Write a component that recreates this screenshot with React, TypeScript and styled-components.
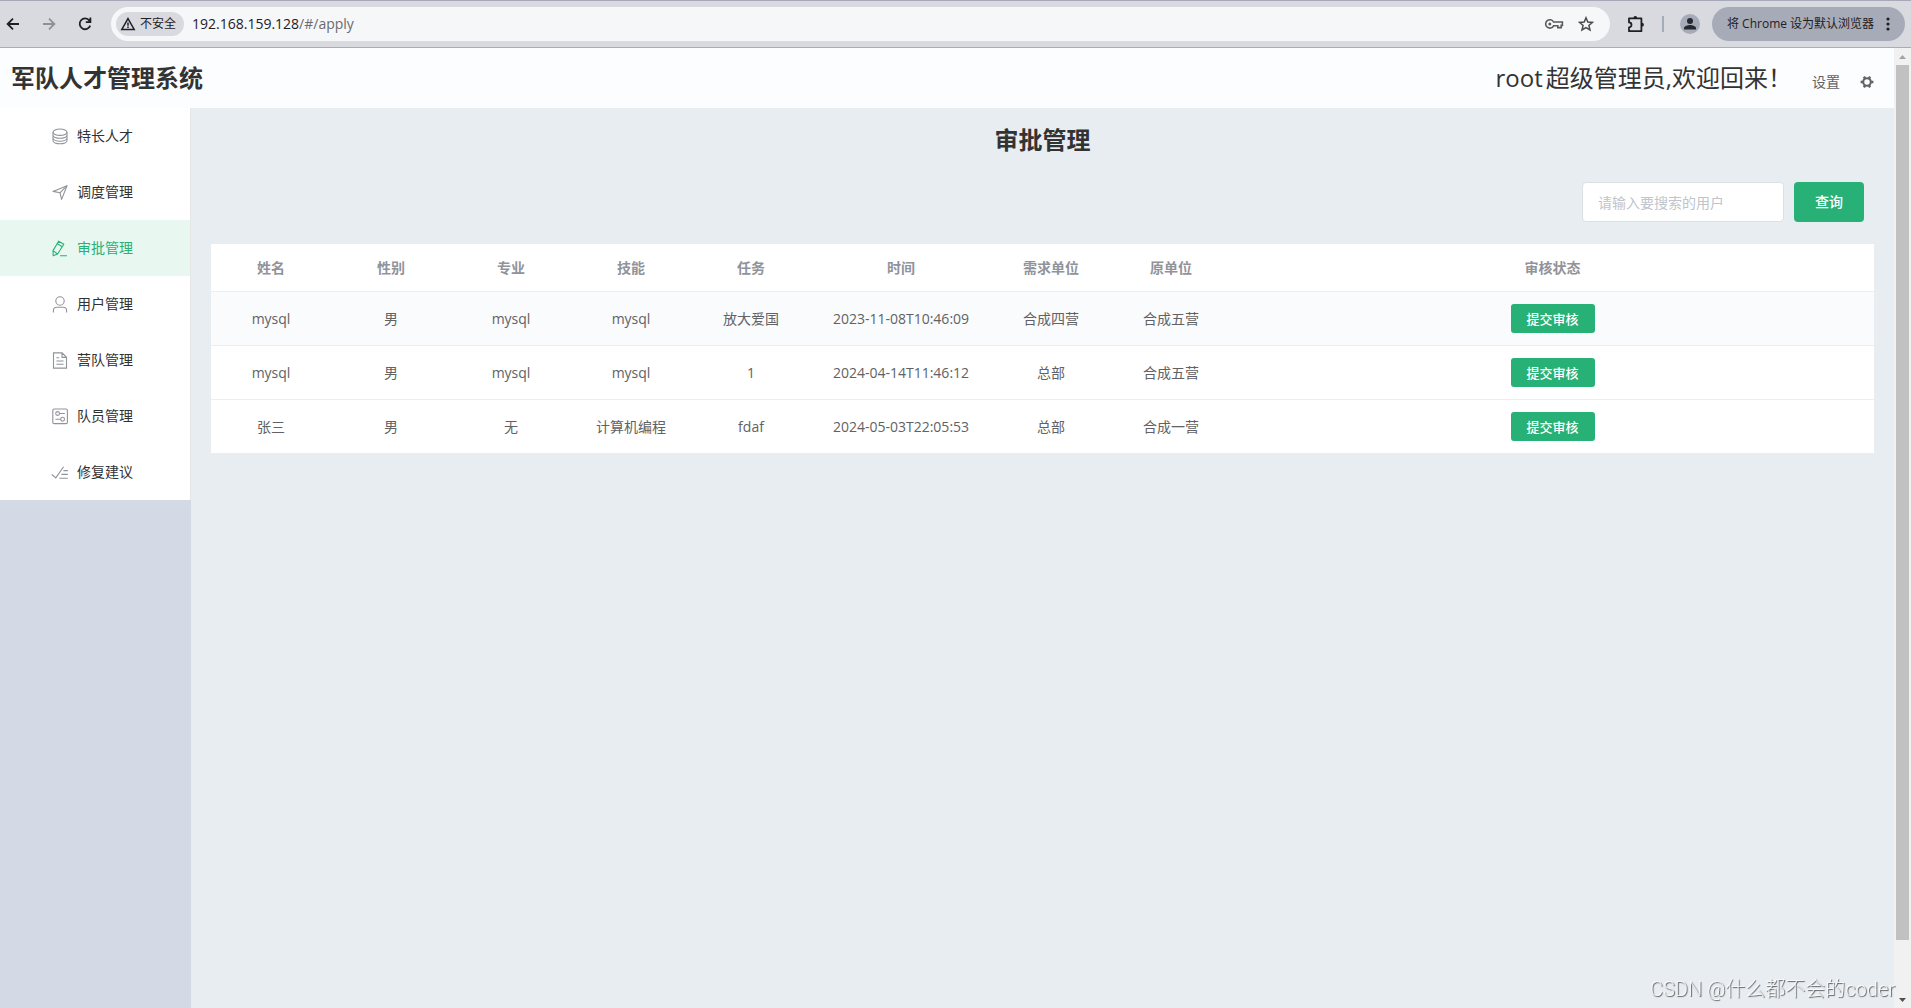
import React from "react";
import styled, { createGlobalStyle, css } from "styled-components";

const GlobalStyle = createGlobalStyle`
  * { box-sizing: border-box; }
  html, body { margin: 0; padding: 0; }
  body, button, input {
    font-family: "Open Sans", "Noto Sans CJK SC", sans-serif;
    font-size: 14px;
    line-height: 20px;
  }
`;

const green = "#28b176";

const Window = styled.div`
  display: flex;
  flex-direction: column;
  height: 100vh;
  overflow: hidden;
  background: #e8edf1;
  color: #303133;
`;

/* ---------- browser toolbar ---------- */

const Toolbar = styled.div`
  display: flex;
  align-items: center;
  flex: none;
  height: 48px;
  padding: 0 6px 0 0;
  background: #d9dae0;
  border-top: 1px solid #a6a9b9;
  border-bottom: 1px solid #abacb5;
`;

const NavButton = styled.button<{ $muted?: boolean }>`
  display: flex;
  align-items: center;
  justify-content: center;
  width: 32px;
  height: 32px;
  padding: 0;
  border: 0;
  background: none;
  color: ${(p) => (p.$muted ? "#8f9096" : "#1f2023")};
`;

const NavGroup = styled.div`
  display: flex;
  gap: 4px;
  padding: 0 10px 0 0;
  margin-left: -3px;
`;

const AddressBar = styled.div`
  display: flex;
  align-items: center;
  flex: 1;
  height: 34px;
  padding: 0 8px 0 5px;
  border-radius: 17px;
  background: #f6f7f9;
`;

const SecurityChip = styled.button`
  display: flex;
  align-items: center;
  gap: 4px;
  height: 24px;
  padding: 0 8px 0 4px;
  border: 0;
  border-radius: 12px;
  background: #d9dae0;
  color: #1f2023;
  font-size: 12px;
  line-height: 24px;
`;

const Url = styled.div`
  flex: 1;
  margin-left: 8px;
  font-size: 14px;
  line-height: 24px;
  color: #1f2023;
`;

const UrlPath = styled.span`
  color: #6a6b6e;
`;

const ActionGroup = styled.div`
  display: flex;
  align-items: center;
  gap: 10px;
  padding-left: 10px;
`;

const Separator = styled.span`
  width: 2px;
  height: 16px;
  background: #a6abb9;
`;

const Avatar = styled.span`
  display: flex;
  align-items: center;
  justify-content: center;
  width: 20px;
  height: 20px;
  border-radius: 50%;
  background: #a6abb9;
`;

const DefaultChip = styled.button`
  display: flex;
  align-items: center;
  justify-content: space-between;
  width: 193px;
  height: 34px;
  margin-left: 6px;
  padding: 0 15px;
  border: 0;
  border-radius: 17px;
  background: #a6abb7;
  color: #1f2023;
  font-size: 12px;
  white-space: nowrap;
`;

/* ---------- page frame ---------- */

const Viewport = styled.div`
  display: flex;
  flex: 1;
  min-height: 0;
`;

const Page = styled.div`
  display: flex;
  flex-direction: column;
  flex: 1;
  min-width: 0;
`;

const Header = styled.header`
  display: flex;
  align-items: baseline;
  justify-content: space-between;
  flex: none;
  height: 60px;
  padding: 0 20px 0 11px;
  background: #fcfdff;
  color: #333;
  line-height: 60px;
`;

const Brand = styled.h1`
  margin: 0;
  font-size: 24px;
  font-weight: 700;
`;

const Account = styled.div`
  display: flex;
  align-items: baseline;
  gap: 20px;
  font-size: 24px;
`;

const UserName = styled.span`
  margin-right: 3px;
`;

const SettingButton = styled.button`
  display: flex;
  align-items: center;
  gap: 20px;
  padding: 0;
  border: 0;
  background: none;
  color: #606266;
`;

const Body = styled.div`
  display: flex;
  flex: 1;
  min-height: 0;
`;

const Aside = styled.aside`
  flex: none;
  width: 191px;
  background: #d3dae6;
`;

const Menu = styled.nav`
  display: flex;
  flex-direction: column;
  background: #fff;
  border-right: 1px solid #e6e6e6;
`;

const MenuItem = styled.a<{ $active?: boolean }>`
  display: flex;
  align-items: center;
  gap: 5px;
  height: 56px;
  padding-left: 48px;
  color: ${(p) => (p.$active ? green : "#303133")};
  text-decoration: none;
  ${(p) => p.$active && css`background: #e9f7f1;`}

  svg {
    width: 24px;
    height: 18px;
    color: ${(p) => (p.$active ? green : "#909399")};
  }
`;

const Main = styled.main`
  flex: 1;
  min-width: 0;
  padding: 14px 20px 20px;
`;

const PageTitle = styled.h2`
  margin: 0;
  font-size: 24px;
  font-weight: 700;
  line-height: 36px;
  text-align: center;
  color: #333;
`;

const SearchBar = styled.form`
  display: flex;
  justify-content: flex-end;
  gap: 10px;
  margin: 24px 10px 22px;
`;

const SearchInput = styled.input`
  width: 202px;
  height: 40px;
  padding: 0 15px;
  border: 1px solid #dcdfe6;
  border-radius: 4px;
  background: #fff;
  color: #606266;

  &::placeholder {
    color: #c0c4cc;
    opacity: 1;
  }
`;

const PrimaryButton = styled.button<{ $small?: boolean }>`
  width: ${(p) => (p.$small ? 84 : 70)}px;
  height: ${(p) => (p.$small ? 29 : 40)}px;
  padding: 0;
  border: 0;
  border-radius: ${(p) => (p.$small ? 3 : 4)}px;
  background: ${green};
  color: #fff;
  font-size: ${(p) => (p.$small ? 13 : 14)}px;
  font-weight: 500;
  vertical-align: middle;
`;

const Table = styled.table`
  width: 100%;
  table-layout: fixed;
  border-collapse: separate;
  border-spacing: 0;
  background: #fff;
  text-align: center;
`;

const HeadCell = styled.th`
  height: 48px;
  padding: 0;
  border-bottom: 1px solid #ebeef5;
  color: #909399;
  font-weight: 700;
`;

const Cell = styled.td`
  height: 54px;
  padding: 0;
  border-bottom: 1px solid #ebeef5;
  color: #606266;
`;

const Row = styled.tr<{ $hover?: boolean }>`
  background: ${(p) => (p.$hover ? "#fafbfd" : "#fff")};
`;

const ScrollTrack = styled.div`
  display: flex;
  flex-direction: column;
  flex: none;
  width: 17px;
  background: #f1f1f1;
`;

const ScrollArrow = styled.span<{ $down?: boolean }>`
  display: flex;
  align-items: center;
  justify-content: center;
  flex: none;
  height: 17px;
  color: ${(p) => (p.$down ? "#505050" : "#a3a3a3")};
`;

const ScrollThumb = styled.span`
  flex: 875;
  margin: 0 2px;
  background: #c1c1c1;
`;

const ScrollRest = styled.span`
  flex: 51;
`;

const Watermark = styled.div`
  position: fixed;
  right: 16px;
  bottom: 4px;
  color: rgba(255, 255, 255, 0.8);
  font-family: Roboto, "Noto Sans CJK SC", sans-serif;
  font-size: 20px;
  font-weight: 300;
  line-height: 30px;
  text-shadow: 1px 1px 1px rgba(0, 0, 0, 0.6);
  pointer-events: none;
`;

/* ---------- icons ---------- */

const Line = ({ children, box = 18 }: { children: React.ReactNode; box?: number }) => (
  <svg width={box} height={box} viewBox="0 0 18 18" fill="none" stroke="currentColor" strokeWidth="1.1" aria-hidden="true">
    {children}
  </svg>
);

const CoinIcon = () => (
  <Line>
    <ellipse cx="9" cy="5.2" rx="7" ry="3.2" />
    <path d="M2 5.2v2.9c0 1.8 3.1 3.2 7 3.2s7-1.4 7-3.2V5.2M2 8.1v2.9c0 1.8 3.1 3.2 7 3.2s7-1.4 7-3.2V8.1M2 11v2.6c0 1.8 3.1 3.2 7 3.2s7-1.4 7-3.2V11" />
  </Line>
);
const PositionIcon = () => (
  <Line>
    <path d="M2 8.4 16 2.7 10.6 16.4 9 9.8z" strokeLinejoin="round" />
    <path d="M9 9.8 16 2.7" />
  </Line>
);
const EditIcon = () => (
  <Line>
    <path d="M7.6 2.2 12.8 5.2 6.6 15 2.2 16.8 2 11.6zM6.2 4.8l5.1 3M2 11.6l4.6 3.4M9 16.8h7" strokeLinejoin="round" />
  </Line>
);
const UserIcon = () => (
  <Line>
    <circle cx="9" cy="6" r="4.2" />
    <path d="M2.4 17.4v-1.8c0-2.2 1.4-3.4 3.4-3.4h6.4c2 0 3.4 1.2 3.4 3.4v1.8" />
  </Line>
);
const DocumentIcon = () => (
  <Line>
    <path d="M2.5 1.9h8.6l4.4 4.4v10.8h-13zM11 2v4.4h4.4M5.4 6.8h2.8M5.4 10h7.2M5.4 13.3h7.2" />
  </Line>
);
const OperationIcon = () => (
  <Line>
    <rect x="1.8" y="2" width="14.6" height="14.6" rx="1.4" />
    <circle cx="6.6" cy="6.5" r="1.9" />
    <circle cx="11.6" cy="12.2" r="1.9" />
    <path d="M8.5 6.5h5.3M4.4 12.2h5.3" />
  </Line>
);
const FinishedIcon = () => (
  <Line>
    <path d="M.8 11.5 4.8 14.9 12.6 3.7M12.4 7.6h4.4M10.4 11.4h6.4M8.4 15.2h8.4" />
  </Line>
);

const GearIcon = () => (
  <svg width="14" height="14" viewBox="0 0 14 14" fill="none" stroke="currentColor" aria-hidden="true">
    <circle cx="7" cy="7" r="3.8" strokeWidth="2.1" />
    <path d="M3.9 1.6 5 3.4M10.1 1.6 9 3.4M3.9 12.4 5 10.6M10.1 12.4 9 10.6M.6 7h2.2M11.2 7h2.2" strokeWidth="2.4" />
  </svg>
);

const BackIcon = () => (
  <svg width="16" height="16" viewBox="0 0 16 16" fill="none" stroke="currentColor" strokeWidth="1.8" aria-hidden="true">
    <path d="M14 8H3M8 2.6 2.6 8 8 13.4" />
  </svg>
);
const ForwardIcon = () => (
  <svg width="16" height="16" viewBox="0 0 16 16" fill="none" stroke="currentColor" strokeWidth="1.8" aria-hidden="true">
    <path d="M2 8h11M8 2.6 13.4 8 8 13.4" />
  </svg>
);
const ReloadIcon = () => (
  <svg width="16" height="16" viewBox="0 0 16 16" fill="none" stroke="currentColor" strokeWidth="1.8" aria-hidden="true">
    <path d="M13.2 9.6A5.4 5.4 0 1 1 12.4 4.6L13.6 6M13.4 1.6V6.2H8.8" />
  </svg>
);
const WarningIcon = () => (
  <svg width="16" height="16" viewBox="0 0 16 16" fill="none" stroke="currentColor" strokeWidth="1.5" aria-hidden="true">
    <path d="M8 2.6 14.2 13.4H1.8zM8 6.4v3.4M8 10.6v1.5" />
  </svg>
);
const KeyIcon = () => (
  <svg width="20" height="16" viewBox="0 0 20 16" fill="none" stroke="#5a5b5f" strokeWidth="1.6" aria-hidden="true">
    <path d="M9.6 6h8.8v3.4h-1.2v2.2h-3.4V9.8H9.6A4.2 4.2 0 1 1 9.6 6z" />
    <circle cx="5.8" cy="8" r="1.5" fill="#5a5b5f" stroke="none" />
  </svg>
);
const StarIcon = () => (
  <svg width="16" height="16" viewBox="0 0 16 16" fill="none" stroke="#4a4b4f" strokeWidth="1.5" aria-hidden="true">
    <path d="M8 1.8 9.8 6l4.6.4-3.5 3 1.1 4.5L8 11.5l-4 2.4 1.1-4.5-3.5-3L6.2 6z" />
  </svg>
);
const PuzzleIcon = () => (
  <svg width="18" height="18" viewBox="0 0 18 18" fill="none" stroke="currentColor" strokeWidth="1.8" aria-hidden="true">
    <path d="M2 3.4h12.4v12.8H2v-3.8a2.4 2.4 0 0 0 0-5z" strokeLinejoin="round" />
    <path d="M6.4 3a1.9 1.9 0 0 1 3.8 0zM15 7.8a1.9 1.9 0 0 1 0 3.8z" fill="currentColor" stroke="none" />
  </svg>
);
const PersonIcon = () => (
  <svg width="14" height="14" viewBox="0 0 14 14" fill="#26282e" aria-hidden="true">
    <circle cx="7" cy="4" r="3" />
    <path d="M1 12.4V11c0-2.1 4-3 6-3s6 .9 6 3v1.4z" />
  </svg>
);
const DotsIcon = () => (
  <svg width="4" height="14" viewBox="0 0 4 14" fill="currentColor" aria-hidden="true">
    <circle cx="2" cy="2" r="1.6" />
    <circle cx="2" cy="7" r="1.6" />
    <circle cx="2" cy="12" r="1.6" />
  </svg>
);
const UpArrow = () => (
  <svg width="7" height="4" viewBox="0 0 7 4" fill="currentColor" aria-hidden="true">
    <path d="M0 4 3.5 0 7 4z" />
  </svg>
);
const DownArrow = () => (
  <svg width="7" height="4" viewBox="0 0 7 4" fill="currentColor" aria-hidden="true">
    <path d="M0 0 3.5 4 7 0z" />
  </svg>
);

/* ---------- data ---------- */

const menu = [
  { label: "特长人才", path: "#/talent", Icon: CoinIcon },
  { label: "调度管理", path: "#/dispatch", Icon: PositionIcon },
  { label: "审批管理", path: "#/apply", Icon: EditIcon, active: true },
  { label: "用户管理", path: "#/user", Icon: UserIcon },
  { label: "营队管理", path: "#/camp", Icon: DocumentIcon },
  { label: "队员管理", path: "#/member", Icon: OperationIcon },
  { label: "修复建议", path: "#/advice", Icon: FinishedIcon },
];

const columns: { label: string; width?: number }[] = [
  { label: "姓名", width: 120 },
  { label: "性别", width: 120 },
  { label: "专业", width: 120 },
  { label: "技能", width: 120 },
  { label: "任务", width: 120 },
  { label: "时间", width: 180 },
  { label: "需求单位", width: 120 },
  { label: "原单位", width: 120 },
  { label: "审核状态" },
];

const rows = [
  ["mysql", "男", "mysql", "mysql", "放大爱国", "2023-11-08T10:46:09", "合成四营", "合成五营"],
  ["mysql", "男", "mysql", "mysql", "1", "2024-04-14T11:46:12", "总部", "合成五营"],
  ["张三", "男", "无", "计算机编程", "fdaf", "2024-05-03T22:05:53", "总部", "合成一营"],
];

export default function App() {
  return (
    <Window>
      <GlobalStyle />
      <Toolbar>
        <NavGroup>
          <NavButton aria-label="后退"><BackIcon /></NavButton>
          <NavButton aria-label="前进" $muted><ForwardIcon /></NavButton>
          <NavButton aria-label="重新加载"><ReloadIcon /></NavButton>
        </NavGroup>
        <AddressBar>
          <SecurityChip><WarningIcon />不安全</SecurityChip>
          <Url role="textbox" aria-label="地址栏" tabIndex={0}>
            192.168.159.128<UrlPath>/#/apply</UrlPath>
          </Url>
          <NavButton aria-label="密码"><KeyIcon /></NavButton>
          <NavButton aria-label="收藏"><StarIcon /></NavButton>
        </AddressBar>
        <ActionGroup>
          <NavButton aria-label="扩展程序"><PuzzleIcon /></NavButton>
          <Separator />
          <NavButton aria-label="个人资料"><Avatar><PersonIcon /></Avatar></NavButton>
        </ActionGroup>
        <DefaultChip>将 Chrome 设为默认浏览器<DotsIcon /></DefaultChip>
      </Toolbar>

      <Viewport>
        <Page>
          <Header>
            <Brand>军队人才管理系统</Brand>
            <Account>
              <span><UserName>root</UserName>超级管理员,欢迎回来！</span>
              <SettingButton>设置<GearIcon /></SettingButton>
            </Account>
          </Header>
          <Body>
            <Aside>
              <Menu>
                {menu.map(({ label, path, Icon, active }) => (
                  <MenuItem key={path} href={path} $active={active}>
                    <Icon />
                    {label}
                  </MenuItem>
                ))}
              </Menu>
            </Aside>
            <Main>
              <PageTitle>审批管理</PageTitle>
              <SearchBar onSubmit={(e) => e.preventDefault()}>
                <SearchInput type="text" aria-label="搜索用户" placeholder="请输入要搜索的用户" />
                <PrimaryButton type="submit">查询</PrimaryButton>
              </SearchBar>
              <Table>
                <colgroup>
                  {columns.map((c) => (
                    <col key={c.label} width={c.width} />
                  ))}
                </colgroup>
                <thead>
                  <tr>
                    {columns.map((c) => (
                      <HeadCell key={c.label} scope="col">{c.label}</HeadCell>
                    ))}
                  </tr>
                </thead>
                <tbody>
                  {rows.map((cells, r) => (
                    <Row key={r} $hover={r === 0}>
                      {cells.map((text, c) => (
                        <Cell key={c}>{text}</Cell>
                      ))}
                      <Cell><PrimaryButton type="button" $small>提交审核</PrimaryButton></Cell>
                    </Row>
                  ))}
                </tbody>
              </Table>
            </Main>
          </Body>
        </Page>
        <ScrollTrack aria-hidden="true">
          <ScrollArrow><UpArrow /></ScrollArrow>
          <ScrollThumb />
          <ScrollRest />
          <ScrollArrow $down><DownArrow /></ScrollArrow>
        </ScrollTrack>
      </Viewport>
      <Watermark>CSDN @什么都不会的coder</Watermark>
    </Window>
  );
}
